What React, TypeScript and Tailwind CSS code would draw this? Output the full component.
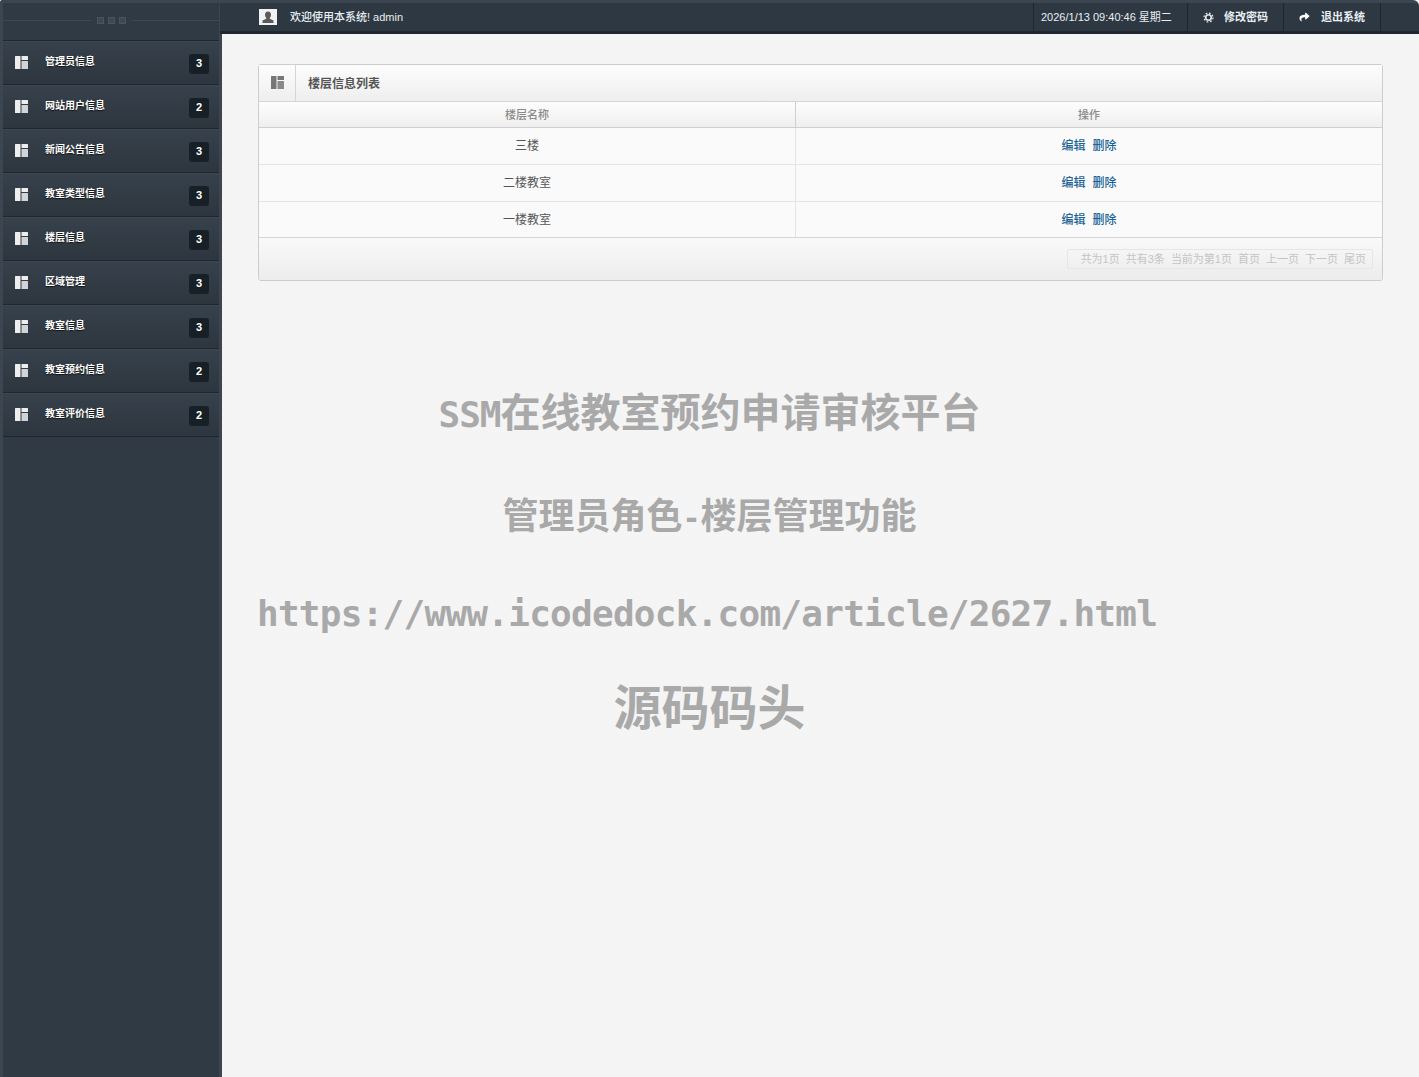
import { FaShare } from "react-icons/fa";

const menus = [
  { name: "管理员信息", count: 3 },
  { name: "网站用户信息", count: 2 },
  { name: "新闻公告信息", count: 3 },
  { name: "教室类型信息", count: 3 },
  { name: "楼层信息", count: 3 },
  { name: "区域管理", count: 3 },
  { name: "教室信息", count: 3 },
  { name: "教室预约信息", count: 2 },
  { name: "教室评价信息", count: 2 },
];

const floors = ["三楼", "二楼教室", "一楼教室"];
const pager = ["共为1页", "共有3条", "当前为第1页", "首页", "上一页", "下一页", "尾页"];

const cjk = "font-['Liberation_Sans','Noto_Sans_CJK_SC',sans-serif]";
const mono = "font-['DejaVu_Sans_Mono','Noto_Sans_CJK_SC',monospace]";

function LayoutIcon({ className }: { className: string }) {
  return (
    <svg viewBox="0 0 13 13" className={className} fill="currentColor">
      <rect x="0" y="0" width="5.5" height="13" rx="0.5" />
      <rect x="6.5" y="0" width="6.5" height="4" rx="0.5" />
      <rect x="6.5" y="5" width="6.5" height="8" rx="0.5" opacity="0.85" />
    </svg>
  );
}

function UserIcon() {
  return (
    <svg viewBox="0 0 18 16" className="w-[18px] h-[16px]">
      <rect width="18" height="16" fill="#f2f2f2" />
      <path d="M9 2.5c-2 0-3 1.4-3 3.2 0 1.2.5 2.3 1.2 3v1.1L3.5 11.4V14h11v-2.6l-3.7-1.6V8.7c.7-.7 1.2-1.8 1.2-3 0-1.8-1-3.2-3-3.2z" fill="#5a5a5a" />
    </svg>
  );
}

function GearIcon() {
  return (
    <svg viewBox="0 0 12 12" className="w-[11px] h-[11px]" fill="none" stroke="#e8e8e8">
      <circle cx="6" cy="6" r="3" strokeWidth="1.8" />
      <circle cx="6" cy="6" r="4.9" strokeWidth="1.3" strokeDasharray="1.9 1.95" />
    </svg>
  );
}

function Sidebar() {
  return (
    <aside className="w-[222px] shrink-0 min-h-[1077px] bg-[#2e3842] bg-[image:conic-gradient(rgba(255,255,255,0.02)_25%,transparent_0_50%,rgba(255,255,255,0.02)_0_75%,transparent_0)] bg-[length:2px_2px] border-l-[3px] border-r-[3px] border-l-[#3c4650] border-r-[#3c4650] border-t-[3px] border-t-[#3c4650] rounded-tl-[3px]">
      <div className="h-[38px] pb-[3px] flex items-center gap-[6px] border-b border-[#1f262d]">
        <div className="flex-1 h-px bg-[#3f4953]" />
        <div className="flex gap-[4px]">
          <span className="w-[7px] h-[7px] bg-[#3e4852] border border-[#4a545e]" />
          <span className="w-[7px] h-[7px] bg-[#3e4852] border border-[#4a545e]" />
          <span className="w-[7px] h-[7px] bg-[#3e4852] border border-[#4a545e]" />
        </div>
        <div className="flex-1 h-px bg-[#3f4953]" />
      </div>
      {menus.map((m) => (
        <div
          key={m.name}
          className="h-[44px] flex items-center pl-[12px] pr-[10px] bg-[image:conic-gradient(rgba(255,255,255,0.02)_25%,transparent_0_50%,rgba(255,255,255,0.02)_0_75%,transparent_0),linear-gradient(to_bottom,#353f49,#2b343d)] bg-[length:2px_2px,100%_100%] border-t border-t-[#3d4751] border-b border-b-[#1f262d]"
        >
          <LayoutIcon className="w-[13px] h-[13px] text-[#eeeeee] -mt-[2px]" />
          <span className={`ml-[17px] flex-1 text-[10px] font-bold text-white -mt-[4px] [text-shadow:0_1px_1px_#111] ${cjk}`}>
            {m.name}
          </span>
          <span className={`w-[20px] h-[20px] mt-[1px] rounded-[3px] bg-[#182027] flex items-center justify-center text-[11px] font-bold text-white ${cjk}`}>
            {m.count}
          </span>
        </div>
      ))}
    </aside>
  );
}

function Topbar() {
  return (
    <header className={`h-[34px] flex items-stretch bg-[#2c3640] bg-[image:conic-gradient(rgba(255,255,255,0.02)_25%,transparent_0_50%,rgba(255,255,255,0.02)_0_75%,transparent_0)] bg-[length:2px_2px] border-t-[3px] border-t-[#3c4650] border-b-[3px] border-b-[#20272e] rounded-tr-[6px] text-[#e8eef2] text-[11px] ${cjk}`}>
      <div className="ml-[39px] flex items-center">
        <UserIcon />
        <span className="ml-[13px] font-medium">欢迎使用本系统! admin</span>
      </div>
      <div className="ml-auto mr-[38px] flex items-stretch border-l border-[#1f262d]">
        <div className="w-[154px] pl-[7px] flex items-center border-r border-[#1f262d]">2026/1/13 09:40:46 星期二</div>
        <div className="w-[96px] pl-[15px] flex items-center border-r border-[#1f262d] font-bold">
          <GearIcon />
          <span className="ml-[10px]">修改密码</span>
        </div>
        <div className="w-[97px] pl-[15px] flex items-center border-r border-[#1f262d] font-bold">
          <FaShare className="w-[11px] h-[10px] text-white" />
          <span className="ml-[11px]">退出系统</span>
        </div>
      </div>
    </header>
  );
}

function FloorTable() {
  return (
    <section className={`mx-[36px] mt-[30px] rounded-[3px] border border-[#cdcdcd] bg-[#f9f9f9] text-[#555] ${cjk}`}>
      <div className="h-[37px] flex items-stretch border-b border-[#d5d5d5] bg-gradient-to-b from-[#fdfdfd] to-[#eeeeee]">
        <div className="w-[37px] flex items-center justify-center border-r border-[#d5d5d5]">
          <LayoutIcon className="w-[13px] h-[13px] text-[#777] -mt-[1px]" />
        </div>
        <h2 className="ml-[12px] self-center mt-[2px] text-[12px] font-bold text-[#555]">楼层信息列表</h2>
      </div>
      <div className="h-[26px] flex border-b border-[#cfcfcf] bg-gradient-to-b from-[#fdfdfd] to-[#efefef] text-[11px] text-[#8a8a8a] font-medium">
        <div className="w-[537px] pt-[2px] flex items-center justify-center border-r border-[#cfcfcf]">楼层名称</div>
        <div className="flex-1 pt-[2px] flex items-center justify-center">操作</div>
      </div>
      {floors.map((f, i) => (
        <div key={f} className={`flex text-[12px] bg-[#fafafa] ${i === 2 ? "h-[35px]" : "h-[37px] border-b border-[#e4e4e4]"}`}>
          <div className="w-[537px] flex items-center justify-center border-r border-[#e4e4e4]">{f}</div>
          <div className="flex-1 flex items-center justify-center gap-[7px] text-[#1a6394] font-medium">
            <a>编辑</a>
            <a>删除</a>
          </div>
        </div>
      ))}
      <div className="h-[43px] flex items-center justify-end pr-[9px] border-t border-[#d5d5d5] bg-gradient-to-b from-[#f9f9f9] to-[#ececec] rounded-b-[3px]">
        <div className="h-[20px] w-[306px] pr-[6px] flex items-center justify-end gap-[6px] border border-[#e6e6e6] rounded-[2px] text-[11px] text-[#c4c4c4]">
          {pager.map((p) => (
            <span key={p}>{p}</span>
          ))}
        </div>
      </div>
    </section>
  );
}

function Watermark() {
  return (
    <div className="absolute inset-x-0 top-0 pointer-events-none text-[#a9a9a9] font-bold text-center font-['Noto_Sans_CJK_SC',sans-serif]">
      <div className="absolute inset-x-0 top-[386px] text-[40px] leading-[48px] whitespace-nowrap">
        <span className={`${mono} text-[36px] tracking-[-1px]`}>SSM</span>在线教室预约申请审核平台
      </div>
      <div className="absolute inset-x-0 top-[491px] text-[36px] leading-[44px] whitespace-nowrap">
        管理员角色<span className={`${mono} text-[30px]`}>-</span>楼层管理功能
      </div>
      <div className={`absolute left-[257px] top-[591px] text-[36px] tracking-[-0.74px] leading-[46px] whitespace-nowrap ${mono}`}>
        https://www.icodedock.com/article/2627.html
      </div>
      <div className="absolute inset-x-0 top-[676px] text-[48px] leading-[56px] whitespace-nowrap">源码码头</div>
    </div>
  );
}

export default function App() {
  return (
    <div className="relative flex min-h-[1077px] bg-[#f6f6f6] bg-[image:conic-gradient(rgba(0,0,0,0.012)_25%,transparent_0_50%,rgba(0,0,0,0.012)_0_75%,transparent_0)] bg-[length:2px_2px] overflow-hidden">
      <Sidebar />
      <main className="flex-1 min-w-0">
        <div className="-ml-[2px]">
          <Topbar />
        </div>
        <FloorTable />
      </main>
      <Watermark />
    </div>
  );
}
